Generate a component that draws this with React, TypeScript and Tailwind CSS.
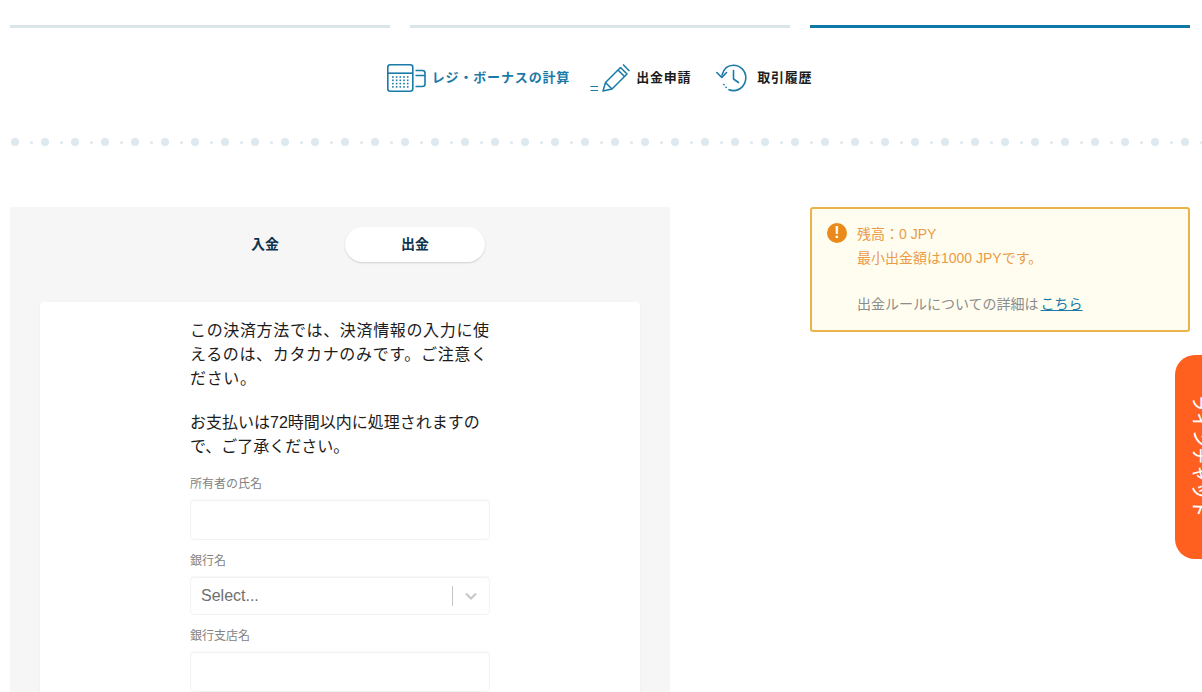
const FONT = '[font-family:"Liberation_Sans","Noto_Sans_CJK_JP",sans-serif]';

function CalcIcon() {
  const dots: React.ReactElement[] = [];
  for (let r = 0; r < 4; r++) for (let c = 0; c < 5; c++) dots.push(<rect key={`${r}-${c}`} x={5.1 + c * 3.7} y={12.2 + r * 3.3} width="1.6" height="1.6" fill="#1a7aa8" />);
  return (
    <svg width="40" height="28" viewBox="0 0 40 28" fill="none" stroke="#1a7aa8" strokeWidth="1.6">
      <rect x="0.8" y="0.8" width="25" height="26.4" rx="2.5" />
      <path d="M1 9.2H26" />
      <g stroke="none">{dots}</g>
      <path d="M28.5 6.5H35.5C37 6.5 38 7.5 38 9V20C38 21.5 37 22.5 35.5 22.5H28.5M28.5 11.5H38" />
    </svg>
  );
}

function PencilIcon() {
  return (
    <svg width="40" height="28" viewBox="0 0 40 28" fill="none" stroke="#1a7aa8" strokeWidth="1.5" strokeLinejoin="round">
      <path d="M0.5 22.5H8M0.5 26.5H8" strokeWidth="1.1" />
      <path d="M13 27L15.5 18.5L30.5 3.5L37 10L22 25L13 27Z" />
      <path d="M15.5 18.5L22 25M28 6L34.5 12.5" />
      <path d="M33 0.5L39.5 7" />
    </svg>
  );
}

function HistoryIcon() {
  return (
    <svg width="31" height="28" viewBox="0 0 31 28" fill="none" stroke="#1a7aa8" strokeWidth="1.6" strokeLinecap="round" strokeLinejoin="round">
      <path d="M6 11C7.6 5 12 1.2 17.5 1.2C24.3 1.2 29.8 6.7 29.8 13.8C29.8 20.9 24.3 26.6 17.5 26.6C15.8 26.6 14.3 26.3 13 25.7" />
      <path d="M0.8 8.5L5.8 13.5L10.5 8.5" />
      <path d="M17.5 6.5V15L22.5 18.5" />
      <path d="M7.8 20.5L8 20.7M10 23.3L10.2 23.5" />
    </svg>
  );
}

function Field({ label, select }: { label: string; select?: boolean }) {
  return (
    <div className="flex flex-col">
      <label className="text-[12px] leading-[18px] text-[#828282]">{label}</label>
      {select ? (
        <div className="mt-[7px] flex h-[38px] w-[300px] items-center rounded-[4px] border border-[#f3f3f3] bg-white shadow-[0_-1px_1px_rgba(0,0,0,0.03)]">
          <span className="flex-1 pl-[10px] text-[16px] text-[#6f6f6f]">Select...</span>
          <span className="h-[20px] w-px bg-[#c4c4c4]" />
          <svg className="mx-[11px]" width="14" height="10" viewBox="0 0 14 10" fill="none" stroke="#c6c6c6" strokeWidth="2">
            <path d="M2 2.5L7 7.5L12 2.5" />
          </svg>
        </div>
      ) : (
        <div className="mt-[7px] h-[40px] w-[300px] rounded-[4px] border border-[#f3f3f3] bg-white shadow-[0_-1px_1px_rgba(0,0,0,0.03)]" />
      )}
    </div>
  );
}

export default function App() {
  return (
    <div className={`relative h-[692px] w-full overflow-hidden bg-white ${FONT}`}>
      <div className="flex gap-[20px] pl-[10px] pr-[12px] pt-[25px]">
        <div className="h-[3px] flex-1 bg-[#dce5ea]" />
        <div className="h-[3px] flex-1 bg-[#dce5ea]" />
        <div className="h-[3px] flex-1 bg-[#0f76a8]" />
      </div>

      <nav className="mt-[36px] flex items-center justify-center pr-[3px] text-[13px] font-bold tracking-[0.75px]">
        <CalcIcon />
        <span className="ml-[5px] tracking-[0.85px] text-[#1a7aa8]">レジ・ボーナスの計算</span>
        <span className="ml-[20px]"><PencilIcon /></span>
        <span className="ml-[6px] text-[#1c1c1c]">出金申請</span>
        <span className="ml-[25px]"><HistoryIcon /></span>
        <span className="ml-[10px] text-[#1c1c1c]">取引履歴</span>
      </nav>

      <div className="mt-[45px] flex h-[10px] items-center pl-[11px]">
        {Array.from({ length: 40 }).map((_, i) => (
          <div key={i} className="flex w-[30px] shrink-0 items-center">
            <span className="h-[8px] w-[8px] rounded-full bg-[#dee8ef]" />
            <span className="ml-[11px] h-[3px] w-[3px] rounded-full bg-[#dee8ef]" />
          </div>
        ))}
      </div>

      <div className="mt-[60px] flex items-start px-[10px]">
        <section className="h-[600px] w-[660px] shrink-0 bg-[#f6f6f6] px-[30px] pt-[20px]">
          <div className="flex justify-center gap-[10px]">
            <button className="h-[35px] w-[140px] rounded-full text-[14px] font-bold text-[#0c3450]">入金</button>
            <button className="h-[35px] w-[140px] rounded-full bg-white text-[14px] font-bold text-[#0c3450] shadow-[0_1px_2px_rgba(0,0,0,0.16)]">出金</button>
          </div>
          <div className="mt-[40px] h-[500px] rounded-[4px] bg-white pl-[150px] pt-[17px] shadow-[0_1px_3px_rgba(0,0,0,0.05)]">
            <div className="w-[300px]">
              <p className="text-[16px] leading-[24.2px] tracking-[0.65px] text-[#1c1c1c]">この決済方法では、決済情報の入力に使えるのは、カタカナのみです。ご注意ください。</p>
              <p className="mt-[19px] text-[16px] leading-[24.5px] text-[#1c1c1c]">お支払いは72時間以内に処理されますので、ご了承ください。</p>
              <div className="mt-[15px] flex flex-col gap-[12px]">
                <Field label="所有者の氏名" />
                <Field label="銀行名" select />
                <Field label="銀行支店名" />
              </div>
            </div>
          </div>
        </section>

        <aside className="ml-[140px] flex h-[125px] w-[380px] shrink-0 gap-[10px] rounded-[3px] border-2 border-[#ebb44a] bg-[#fffdf0] px-[15px] pt-[14px]">
          <span className="flex h-[20px] w-[20px] shrink-0 items-center justify-center rounded-full bg-[#ea8a1c] text-[16px] font-bold leading-none text-white">!</span>
          <div className="text-[14px] leading-[23.5px] text-[#eb9b46]">
            <p>残高：0 JPY</p>
            <p>最小出金額は1000 JPYです。</p>
            <p className="mt-[23px] text-[#8c8c8c]">
              出金ルールについての詳細は<a className="ml-[2px] text-[#1a7aa8] underline">こちら</a>
            </p>
          </div>
        </aside>
      </div>

      <div className="absolute right-0 top-[355px] h-[204px] w-[27px] overflow-hidden rounded-l-[20px] bg-[#ff5f1f] pl-[14px] pt-[40px]">
        <span className="block whitespace-nowrap text-[16px] font-medium leading-[20px] tracking-[1.6px] text-white [text-orientation:sideways] [writing-mode:vertical-rl]">ラインチャット</span>
      </div>
    </div>
  );
}
